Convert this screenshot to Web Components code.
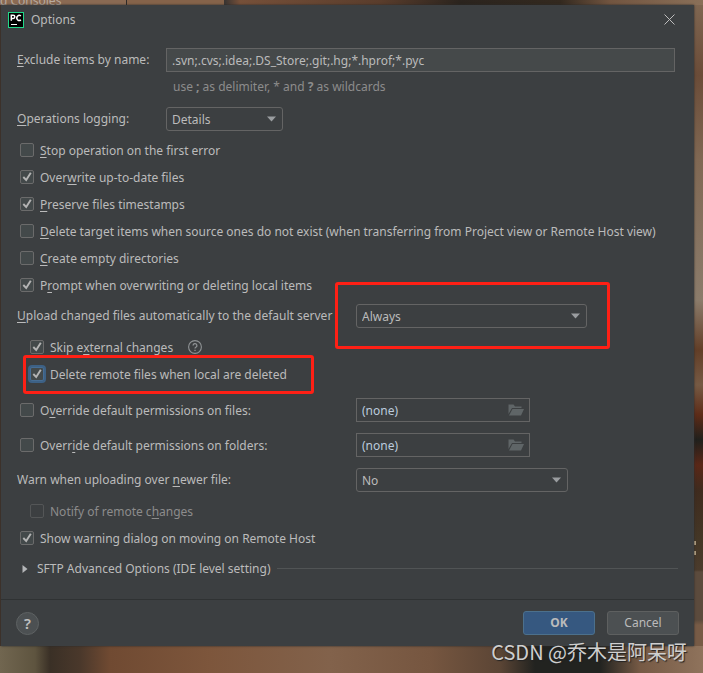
<!DOCTYPE html>
<html lang="en">
<head>
<meta charset="utf-8">
<title>Options</title>
<style>
  html { background: #6f5644; }
  body {
    margin: 0;
    font: 12px/16px "Noto Sans", "Noto Sans CJK SC", sans-serif;
    color: #bbbbbb;
  }
  u { text-decoration: underline; text-underline-offset: 2px; text-decoration-skip-ink: none; }
</style>
</head>
<body>
<desktop-backdrop>
  <options-dialog heading="Options">
    <text-row value=".svn;.cvs;.idea;.DS_Store;.git;.hg;*.hprof;*.pyc">
      <u>E</u>xclude items by name:
      <span slot="hint">use <b>;</b> as delimiter, * and <b>?</b> as wildcards</span>
    </text-row>
    <select-row style="--label: 149px; --field: 117px; margin-top: 5px" value="Details"><u>O</u>perations logging:</select-row>
    <check-row style="margin-top: 6px"><u>S</u>top operation on the first error</check-row>
    <check-row checked>Over<u>w</u>rite up-to-date files</check-row>
    <check-row checked><u>P</u>reserve files timestamps</check-row>
    <check-row><u>D</u>elete target items when source ones do not exist (when transferring from Project view or Remote Host view)</check-row>
    <check-row><u>C</u>reate empty directories</check-row>
    <check-row checked>P<u>r</u>ompt when overwriting or deleting local items</check-row>
    <mark-box style="--inset: -22px -23px -21px auto; --width: 275px; margin-top: 5px">
      <select-row style="--field: 231px" value="Always"><u>U</u>pload changed files automatically to the default server</select-row>
    </mark-box>
    <check-row nested checked help style="margin-top: 6px">Skip e<u>x</u>ternal changes</check-row>
    <mark-box class="wide" style="--inset: -6px auto -6px 6px; --width: 291px">
      <check-row nested checked focused>Delete remote files when local are deleted</check-row>
    </mark-box>
    <permission-row style="margin-top: 10px" value="(none)" name="Default permissions on files">O<u>v</u>erride default permissions on files:</permission-row>
    <permission-row style="margin-top: 11px" value="(none)" name="Default permissions on folders">Overr<u>i</u>de default permissions on folders:</permission-row>
    <select-row style="--field: 212px; margin-top: 11px" value="No">Warn when uploading over <u>n</u>ewer file:</select-row>
    <check-row nested disabled style="margin-top: 6px">Notify of remote c<u>h</u>anges</check-row>
    <check-row checked>Show warning dialog on moving on Remote Host</check-row>
    <section-toggle>SFTP Advanced Options (IDE level setting)</section-toggle>
    <push-button slot="actions" primary>OK</push-button>
    <push-button slot="actions">Cancel</push-button>
  </options-dialog>
</desktop-backdrop>

<script>
const define = (name, css, render) => {
  customElements.define(name, class extends HTMLElement {
    connectedCallback() {
      if (this.shadowRoot) return;
      const root = this.attachShadow({ mode: "open" });
      root.innerHTML = `<style>* { box-sizing: border-box; } ${css}</style>${render(this)}`;
    }
  });
};

define("desktop-backdrop", `
  :host {
    display: block; position: relative; box-sizing: border-box; min-height: 100vh;
    padding: 5px 9px 27px 1px; overflow: hidden;
    background:
      linear-gradient(#b3a183, #b3a183) right 7px top 541px / 2px 4px no-repeat,
      linear-gradient(#b3a183, #b3a183) right 7px top 551px / 2px 4px no-repeat,
      linear-gradient(90deg, #8a6a53 0 126px, #2e2a28 126px 127px, #85634a 127px 224px, #3a3532 224px 225px, #765039 240px, #5a3d2c 380px, #2b241e 460px, #33291f 560px, #725540 610px, #8a7059) top / 100% 5px no-repeat,
      linear-gradient(90deg, #716650, #5e543f 35px, #3a3026 50px, #4a382b 80px, #704a32 110px, #7d563c 210px, #82624b 330px, #765640 430px, #5b4535 500px, #222320 535px, #222320 600px, #765a45 640px, #8f735c) bottom / 100% 27px no-repeat,
      linear-gradient(180deg, #806853, #6b4c38 75px, #806853 160px, #8b7c6b 300px, #623e27 350px, #765a44 385px, #5d2b17 415px, #20201c 440px, #5a2717 465px, #3f2b1e 490px, #443726 540px, #4b3b2c 570px, #5c4b3d 572px 620px, #775b46 625px) right / 9px 100% no-repeat,
      #46352c;
  }
  .behind { position: absolute; left: 0; top: -7px; color: #b9aca0; white-space: nowrap; }
  .credit {
    position: absolute; right: 16px; bottom: 8px; font-size: 20px; line-height: 26px;
    font-family: "Noto Sans CJK SC", sans-serif;
    color: #cfcfcf; text-shadow: 1px 1px 1px #222; white-space: nowrap;
  }
`, () => `<div class="behind">d Consoles</div><slot></slot><div class="credit">CSDN @乔木是阿呆呀</div>`);

define("options-dialog", `
  :host { display: flex; flex-direction: column; position: relative; background: #3c3f41; box-shadow: 0 0 2px #2b2b2b; }
  header { display: flex; align-items: center; gap: 7px; height: 30px; padding: 0 17px 0 7px; }
  h1 { flex: 1; margin: 0; font-size: 12px; font-weight: 400; }
  svg { display: block; }
  .close { padding: 2px 2px 4px; border: 0; background: none; color: #bdbdbd; }
  main { display: flex; flex-direction: column; padding: 13px 16px 14px; }
  footer { display: flex; align-items: center; gap: 12px; height: 47px; padding: 0 15px; border-top: 1px solid #2f3233; }
  .help {
    width: 23px; height: 23px; margin-right: auto; padding: 0; border: 1px solid #5e6263; border-radius: 50%;
    background: #4c5052; color: #c0c0c0; font: 600 15px/20px "Noto Sans", sans-serif;
  }
`, el => `
  <header>
    <svg width="16" height="16" viewBox="0 0 16 16" aria-hidden="true">
      <rect width="16" height="16" fill="#21d789"/><rect x="1" y="1" width="14" height="14" fill="#000"/>
      <path d="M3.300 8.800V3.200h1.900a1.600 1.600 0 0 1 0 3.200H3.300M12.900 4a2.500 2.500 0 1 0 0 3.900" fill="none" stroke="#fff" stroke-width="1.500"/>
      <path d="M3 12h6v1H3z" fill="#fff"/>
    </svg>
    <h1>${el.getAttribute("heading")}</h1>
    <button class="close" aria-label="Close"><svg width="11" height="11" viewBox="0 0 11 11"><path d="M.5.5l10 10M10.500.5l-10 10" fill="none" stroke="currentColor"/></svg></button>
  </header>
  <main><slot></slot></main>
  <footer><button class="help" aria-label="Help">?</button><slot name="actions"></slot></footer>`);

define("push-button", `
  :host { display: block; }
  button {
    width: 72px; height: 24px; padding: 0; border: 1px solid #5e6060; border-radius: 3px;
    background: #4c5052; color: #bbb; font: inherit;
  }
  :host([primary]) button { background: #365880; border-color: #4c708c; font-weight: 700; }
`, () => `<button type="button"><slot></slot></button>`);

define("text-row", `
  :host { display: grid; grid-template-columns: 149px 1fr; align-items: center; padding-right: 3px; }
  input {
    width: 100%; height: 24px; padding: 0 5px; border: 1px solid #646464; outline: 0;
    background: #45494a; color: #bbb; font: inherit;
  }
  .hint { grid-column: 2; padding: 7px; color: #8c8c8c; }
`, el => `<label for="f"><slot></slot></label><input id="f" value="${el.getAttribute("value")}"><div class="hint"><slot name="hint"></slot></div>`);

define("select-row", `
  :host { display: grid; grid-template-columns: var(--label, 339px) var(--field); align-items: center; white-space: nowrap; }
  .box { display: grid; align-items: center; }
  select, svg { grid-area: 1 / 1; }
  select {
    appearance: none; width: 100%; height: 24px; padding: 2px 24px 0 5px; border: 1px solid #646464;
    border-radius: 3px; background: #3c3f41; color: #bbb; font: inherit;
  }
  svg { justify-self: end; margin-right: 7px; pointer-events: none; z-index: 1; }
`, el => `<label for="f"><slot></slot></label>
  <span class="box"><select id="f"><option>${el.getAttribute("value")}</option></select>
  <svg width="9" height="6" viewBox="0 0 9 6" aria-hidden="true"><path d="M0 .5h9L4.500 5.500z" fill="#9a9da0"/></svg></span>`);

const checkCss = `
  label { display: flex; align-items: center; gap: 6px; }
  label span { display: block; padding-top: 2px; }
  .tick {
    appearance: none; flex: none; width: 14px; height: 14px; margin: 0; border: 1px solid #6b6b6b;
    border-radius: 2px; background: #43494a; outline: 0;
  }
  .tick:checked {
    background: #43494a url("data:image/svg+xml,%3Csvg xmlns='http://www.w3.org/2000/svg' viewBox='0 0 12 12'%3E%3Cpath d='M2.300 6l2.900 3L9.800 1.800' fill='none' stroke='%23b4b4b4' stroke-width='1.900'/%3E%3C/svg%3E") center / 12px 12px;
  }
  .tick:disabled { border-color: #545657; background: #3c3f41; }
`;

define("check-row", `
  :host { display: flex; align-items: center; gap: 15px; box-sizing: border-box; height: 27px; padding: 0 0 1px 3px; white-space: nowrap; }
  :host([nested]) { padding-left: 13px; }
  :host([disabled]) { color: #8c8c8c; }
  :host([focused]) .tick { border-color: #466d94; box-shadow: 0 0 0 2px #3d6185; }
  ${checkCss}
  .info { padding: 0; border: 0; background: none; color: #8f9395; line-height: 0; }
`, el => `
  <label><input class="tick" type="checkbox" ${el.hasAttribute("checked") ? "checked" : ""} ${el.hasAttribute("disabled") ? "disabled" : ""}><span><slot></slot></span></label>
  ${el.hasAttribute("help") ? `<button class="info" type="button" aria-label="More information"><svg width="14" height="14" viewBox="0 0 14 14"><circle cx="7" cy="7" r="6.400" fill="none" stroke="currentColor" stroke-width="1.100"/><path d="M5.100 5.600a1.900 1.900 0 1 1 2.800 1.600c-.7.4-.9.7-.9 1.400M7 9.700v1.300" fill="none" stroke="currentColor" stroke-width="1.300"/></svg></button>` : ""}`);

define("permission-row", `
  :host { display: grid; grid-template-columns: 339px 174px; align-items: center; white-space: nowrap; }
  ${checkCss}
  label { padding-left: 3px; }
  .box { display: flex; align-items: center; height: 24px; padding: 0 5px; border: 1px solid #646464; }
  .box input { flex: 1; min-width: 0; height: 20px; padding: 0; border: 0; outline: 0; background: none; color: #bbcbdd; font: inherit; }
  button { padding: 0; border: 0; background: none; line-height: 0; }
`, el => `
  <label><input class="tick" type="checkbox"><span><slot></slot></span></label>
  <div class="box"><input value="${el.getAttribute("value")}" aria-label="${el.getAttribute("name")}">
  <button type="button" aria-label="Browse"><svg width="16" height="12" viewBox="0 0 16 12"><path d="M.5 10V.5h5l1.500 2h6.500v1.500H4z" fill="#5f6567"/><path d="M4.500 5H16l-3 6.500H1z" fill="#5f6567"/></svg></button></div>`);

define("section-toggle", `
  :host { display: flex; align-items: center; gap: 6px; height: 33px; padding-left: 5px; white-space: nowrap; }
  button { display: flex; align-items: center; gap: 9px; padding: 0; border: 0; background: none; color: inherit; font: inherit; }
  hr { flex: 1; margin: 0; border: 0; border-top: 1px solid #515455; }
`, () => `<button type="button" aria-expanded="false"><svg width="6" height="8" viewBox="0 0 6 8" aria-hidden="true"><path d="M.5 0v8L5.500 4z" fill="#b4b6b8"/></svg><span><slot></slot></span></button><hr>`);

define("mark-box", `
  :host { display: block; position: relative; width: fit-content; }
  :host(.wide) { width: auto; }
  .frame {
    position: absolute; inset: var(--inset); width: var(--width); z-index: 2;
    border: 3px solid #ff2015; border-radius: 3px; pointer-events: none;
  }
`, () => `<slot></slot><div class="frame"></div>`);
</script>
</body>
</html>
